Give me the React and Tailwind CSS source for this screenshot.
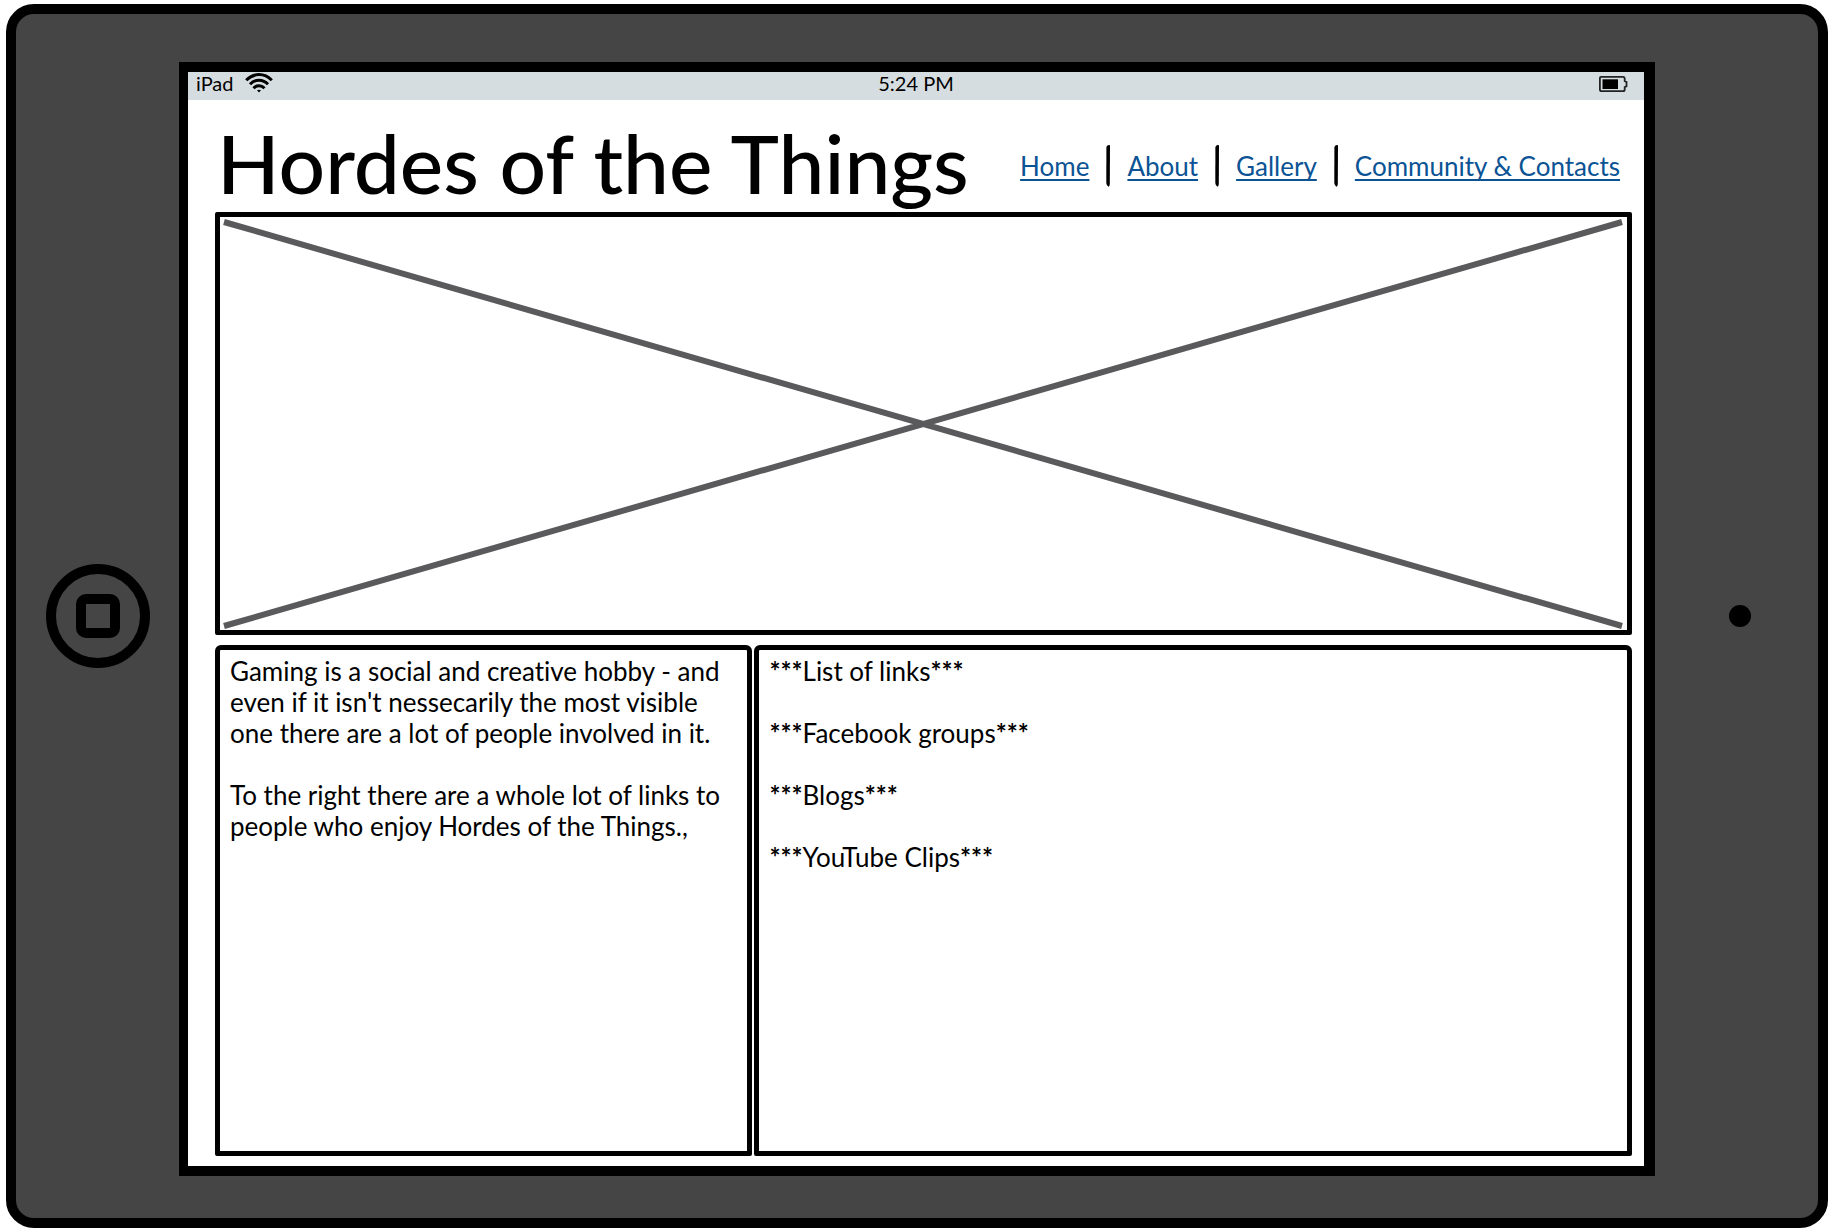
const links = ["Home", "About", "Gallery", "Community & Contacts"];
const sections = ["List of links", "Facebook groups", "Blogs", "YouTube Clips"];

function WifiIcon() {
  return (
    <svg aria-hidden="true" viewBox="0 0 28 20" className="h-5 w-7" fill="none" stroke="#000" strokeWidth="3" strokeLinecap="butt">
      <path d="M1.200 7.300C8.500-.3 19.500-.3 26.800 7.300" />
      <path d="M5 11.200C10 5.800 18 5.800 23 11.200" />
      <path d="M8.500 15.200C11.500 12 16.500 12 19.500 15.200" />
      <path d="M12 17.300Q14 16 16 17.300L14 19.600Z" fill="#000" stroke="none" />
    </svg>
  );
}

function BatteryIcon() {
  return (
    <svg aria-hidden="true" viewBox="0 0 30 18" className="h-[18px] w-[30px]" fill="none" stroke="#222" strokeWidth="1.8">
      <path d="M2.500 1.900H25Q26.700 1.900 26.700 4V6.200L28.500 6.800V11.300L26.700 12V14.500Q26.700 16.200 25 16.200H3.500Q1.900 16.200 1.900 14.500V3Q1.900 1.900 3 1.900Z" />
      <path d="M4.500 4.300H20V14H4.500Z" fill="#000" stroke="none" />
    </svg>
  );
}

function Separator() {
  return (
    <svg aria-hidden="true" viewBox="0 0 4 42" className="h-[42px] w-1 shrink-0">
      <path d="M.4 2Q1.500-.5 4 .3L3.800 39Q3.600 41.500 2.400 41.800Q.6 41 .3 38Z" />
    </svg>
  );
}

function Panel({ children }) {
  return (
    <section className="rounded-t-md rounded-b-xs border-5 border-black px-2.5 py-1.5 text-[26px] leading-[31px]">
      {children}
    </section>
  );
}

export default function App() {
  return (
    <div className="flex min-h-screen bg-white pt-1 pr-1 pb-1 pl-1.5 font-[Lato,sans-serif] text-black [font-variant-ligatures:none]">
      <div className="grid flex-1 grid-cols-[163px_1fr_163px] rounded-[28px] border-10 border-black bg-[#454545]">
        <div className="flex items-center justify-center">
          <button aria-label="Home button" className="flex size-[104px] items-center justify-center rounded-full border-10 border-black">
            <span className="size-11 rounded-[10px] border-10 border-black" />
          </button>
        </div>

        <div className="mt-12 mb-[42px] flex min-w-0 flex-col border-y-10 border-r-11 border-l-9 border-black bg-white">
          <header className="grid h-7 grid-cols-3 items-center bg-[#d6dde0] px-2 text-xl leading-5">
            <div className="flex items-center gap-3 pb-1.5">
              iPad <WifiIcon />
            </div>
            <time className="pb-1.5 text-center">5:24 PM</time>
            <div className="flex justify-end pr-2 pb-1">
              <BatteryIcon />
            </div>
          </header>

          <main className="flex flex-1 flex-col pt-[18px] pr-3 pb-2.5 pl-[27px]">
            <div className="mb-1.5 flex items-center justify-between pr-3 pl-0.5">
              <h1 className="text-[82px] leading-[88px] font-medium whitespace-nowrap">Hordes of the Things</h1>
              <nav className="flex items-center gap-[17px] pt-2 text-[26px] leading-[31px] whitespace-nowrap text-[#0b5394]">
                {links.map((label, i) => (
                  <div key={label} className="contents">
                    {i > 0 && <Separator />}
                    <a href="#" className="underline decoration-2 underline-offset-3 [text-decoration-skip-ink:none]">{label}</a>
                  </div>
                ))}
              </nav>
            </div>

            <div role="img" aria-label="Image placeholder" className="aspect-[1417/423] rounded-xs border-5 border-black p-1">
              <svg viewBox="0 0 1399 405" preserveAspectRatio="none" className="block size-full overflow-visible" stroke="#5a5a5c" strokeWidth="6">
                <path d="M0 1L1398 405M0 405L1398 1" />
              </svg>
            </div>

            <div className="mt-2.5 grid flex-1 grid-cols-[537fr_877fr] gap-0.5">
              <Panel>
                <p>Gaming is a social and creative hobby - and even if it isn't nessecarily the most visible one there are a lot of people involved in it.</p>
                <p className="mt-[31px]">To the right there are a whole lot of links to people who enjoy Hordes of the Things.,</p>
              </Panel>
              <Panel>
                <ul className="flex flex-col gap-[31px]">
                  {sections.map((name) => (
                    <li key={name}><b>***</b>{name}<b>***</b></li>
                  ))}
                </ul>
              </Panel>
            </div>
          </main>
        </div>

        <div className="flex items-center justify-center pl-1.5">
          <div className="size-[22px] rounded-full bg-black" />
        </div>
      </div>
    </div>
  );
}
